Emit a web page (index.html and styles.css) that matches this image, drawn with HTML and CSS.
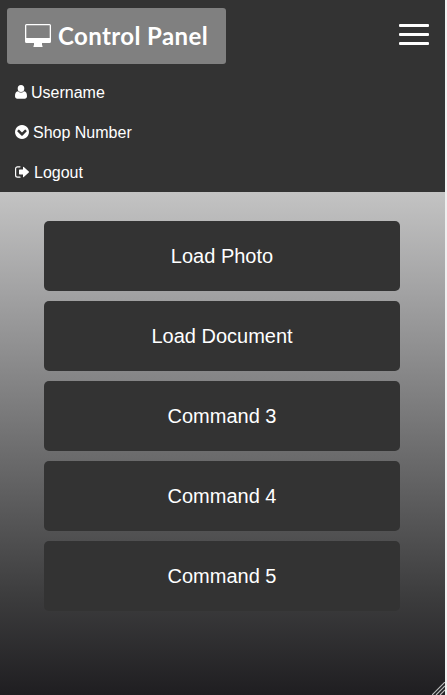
FILE: index.html
```html
<!DOCTYPE html>
<html lang="en">
<head>
<meta charset="utf-8">
<title>Control Panel</title>
<link rel="stylesheet" href="styles.css">
</head>
<body>
<div class="page">
  <header class="navbar">
    <div class="topbar">
      <a class="brand">
        <svg class="monitor" viewBox="0 0 26 23"><path fill="#fff" fill-rule="evenodd" d="M1.500 0h23A1.500 1.500 0 0 1 26 1.500V17.500A1.500 1.500 0 0 1 24.500 19H17v2.500h.500V23H8.500v-1.500H9V19H1.500A1.500 1.500 0 0 1 0 17.500V1.500A1.500 1.500 0 0 1 1.500 0zM1.300 1.300V14H24.700V1.300z"/></svg>
        <span class="brand-text">Control Panel</span>
      </a>
      <div class="toggle"><span></span><span></span><span></span></div>
    </div>
    <nav class="links">
      <a><svg class="user" viewBox="0 0 12 14"><path d="M6 0a3.300 3.500 0 0 1 3.300 3.500A3.300 3.500 0 0 1 6 7a3.300 3.500 0 0 1-3.300-3.500A3.300 3.500 0 0 1 6 0zM2.900 6.200C3.700 7.100 4.800 7.600 6 7.600s2.300-.5 3.100-1.400C11.200 6.400 12 8.500 12 11.200 12 12.800 11 13.700 9.700 13.700H2.300C1 13.700 0 12.800 0 11.200 0 8.500.8 6.400 2.900 6.200z"/></svg><span>Username</span></a>
      <a><svg class="chevron" viewBox="0 0 1536 1536"><path fill-rule="evenodd" d="M813 1171l454-454q19-19 19-45t-19-45l-102-102q-19-19-45-19t-45 19L768 832 461 525q-19-19-45-19t-45 19L269 627q-19 19-19 45t19 45l454 454q19 19 45 19t45-19zM1536 768q0 209-103 385.500T1153.500 1433 768 1536t-385.500-103T103 1153.500 0 768t103-385.500T382.500 103 768 0t385.500 103T1433 382.500 1536 768z"/></svg><span>Shop Number</span></a>
      <a><svg class="signout" viewBox="0 0 14 12"><path d="M5 .8H2.500A1.900 1.900 0 0 0 .6 2.700v6.600A1.900 1.900 0 0 0 2.500 11.200H5" fill="none" stroke="#fff" stroke-width="1.200" stroke-linecap="round"/><path d="M4 4.200q0-.6.600-.6H8V1.200q0-.9.800-.3l5 4.700q.4.400 0 .8l-5 4.700q-.8.600-.8-.3V8.400H4.600q-.6 0-.6-.6z"/></svg><span>Logout</span></a>
    </nav>
  </header>
  <main class="commands">
    <button>Load Photo</button>
    <button>Load Document</button>
    <button>Command 3</button>
    <button>Command 4</button>
    <button>Command 5</button>
  </main>
  <svg class="grip" viewBox="0 0 13 13"><path d="M0 13L13 0M4 13L13 4M8 13L13 8" stroke="#bbb" stroke-width="1.200"/></svg>
</div>
</body>
</html>
```
FILE: styles.css
```css
* { box-sizing: border-box; }
body {
  margin: 0;
  background: #f0f0f0;
  font-family: "Liberation Sans", Arial, sans-serif;
  color: #fff;
}
.page {
  position: relative;
  width: 445px;
  height: 695px;
  display: flex;
  flex-direction: column;
  overflow: hidden;
}
.navbar {
  height: 192px;
  background: #333;
  padding: 8px 7px 0;
}
.topbar {
  display: flex;
  justify-content: space-between;
  height: 56px;
}
.brand {
  display: flex;
  align-items: center;
  width: 219px;
  padding-left: 18px;
  background: #808080;
  border-radius: 3px;
}
.monitor { width: 26px; height: 23px; margin: 0 7px 1px 0; }
.brand-text {
  font: 700 24px/56px Lato, sans-serif;
  letter-spacing: 0.4px;
  white-space: nowrap;
}
.toggle {
  display: flex;
  flex-direction: column;
  gap: 6px;
  width: 30px;
  margin: 16px 9px 0 0;
}
.toggle span { height: 3px; border-radius: 1px; background: #fff; }
.links { display: flex; flex-direction: column; padding: 8px 8px 0; }
.links a {
  display: flex;
  align-items: center;
  height: 40px;
  font-size: 16px;
}
.links span { padding-top: 2px; }
.links svg { fill: #fff; }
.user { width: 12px; height: 14px; margin-right: 4px; }
.chevron { width: 14px; height: 14px; margin-right: 4px; }
.signout { width: 14px; height: 12px; margin-right: 5px; }
.commands {
  flex: 1;
  display: flex;
  flex-direction: column;
  gap: 10px;
  padding: 29px 45px 0 44px;
  background: linear-gradient(#c3c3c3, #a2a2a3 20%, #3d3d3e 80%, #1f1e21);
}
.commands button {
  height: 70px;
  padding: 0;
  border: 0;
  border-radius: 5px;
  background: #333;
  color: #fff;
  font: 20px "Liberation Sans", Arial, sans-serif;
}
.grip { position: absolute; right: 0; bottom: 0; width: 13px; height: 13px; }
```
